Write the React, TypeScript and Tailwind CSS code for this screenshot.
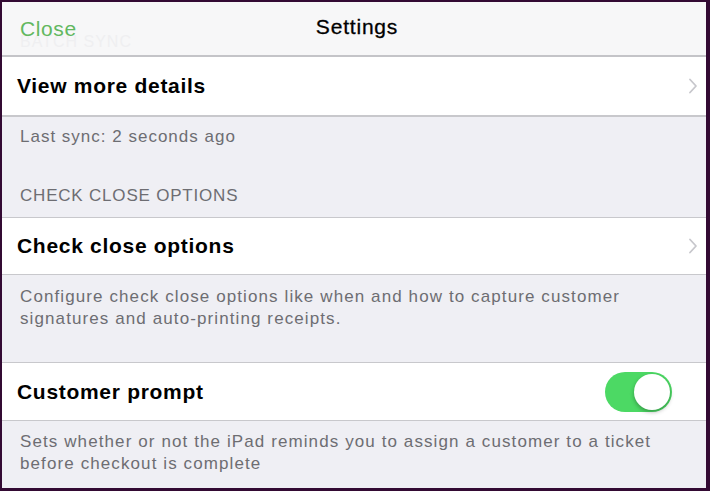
import React, { useState } from 'react'

function Chevron() {
  return (
    <svg width="10" height="16" viewBox="0 0 10 16" className="text-[#c7c7cc]">
      <path d="M2 1.5 L8 8 L2 14.5" fill="none" stroke="currentColor" strokeWidth="1.8" strokeLinecap="round" strokeLinejoin="round" />
    </svg>
  )
}

function Toggle({ on, onChange }: { on: boolean; onChange: () => void }) {
  return (
    <button
      onClick={onChange}
      className={`relative h-[40px] w-[67px] rounded-full transition-colors ${on ? 'bg-[#4cd964]' : 'bg-[#e5e5ea]'}`}
    >
      <span
        className={`absolute top-[2px] h-[36px] w-[36px] rounded-full bg-white shadow-[0_2px_4px_rgba(0,0,0,0.3)] transition-all ${on ? 'left-[29px]' : 'left-[2px]'}`}
      />
    </button>
  )
}

export default function App() {
  const [customerPrompt, setCustomerPrompt] = useState(true)

  return (
    <div className="h-[491px] w-[710px] overflow-hidden bg-[#330a33] pt-[2px] pr-[4px] pb-[3px] pl-[2px] font-['Liberation_Sans',Arial,sans-serif]">
      <div className="flex h-full flex-col overflow-hidden bg-[#efeff4]">
        {/* Nav bar, with the scrolled-away section header showing faintly through it */}
        <div className="relative flex h-[55px] shrink-0 items-center justify-center border-b-2 border-[#c4c4c8] bg-[#f7f7f8] pb-[4px]">
          <span className="absolute top-[28px] left-[18px] text-[16px] tracking-[1px] text-[#efeff1]">BATCH SYNC</span>
          <button className="absolute top-[11px] left-[18px] text-[21px] tracking-[0.6px] text-[#62b860]">Close</button>
          <h1 className="ml-[6px] text-[21px] tracking-[0.8px] text-black [-webkit-text-stroke:0.3px_black]">Settings</h1>
        </div>

        {/* View more details */}
        <div className="flex h-[60px] shrink-0 items-center justify-between border-b-2 border-[#c8c8cc] bg-white pr-[8px] pl-[15px]">
          <span className="text-[21px] font-bold tracking-[0.7px] text-black">View more details</span>
          <Chevron />
        </div>
        <div className="px-[18px] pt-[10px] text-[17px] leading-[20px] tracking-[1px] text-[#6d6d72]">Last sync: 2 seconds ago</div>

        <div className="mt-[39px] px-[18px] pb-[11px] text-[17px] leading-[20px] tracking-[0.8px] text-[#6d6d72]">CHECK CLOSE OPTIONS</div>

        {/* Check close options */}
        <div className="flex h-[58px] shrink-0 items-center justify-between border-y border-[#c8c8cc] bg-white pr-[8px] pl-[15px]">
          <span className="text-[21px] font-bold tracking-[0.7px] text-black">Check close options</span>
          <Chevron />
        </div>
        <div className="px-[18px] pt-[11px] text-[17px] leading-[22px] tracking-[1.1px] text-[#6d6d72]">
          Configure check close options like when and how to capture customer
          <br />
          signatures and auto-printing receipts.
        </div>

        {/* Customer prompt */}
        <div className="mt-[32px] flex h-[59px] shrink-0 items-center justify-between border-y border-[#c8c8cc] bg-white pr-[34px] pl-[15px]">
          <span className="text-[21px] font-bold tracking-[0.7px] text-black">Customer prompt</span>
          <Toggle on={customerPrompt} onChange={() => setCustomerPrompt(!customerPrompt)} />
        </div>
        <div className="px-[18px] pt-[10px] text-[17px] leading-[22px] tracking-[1.1px] text-[#6d6d72]">
          Sets whether or not the iPad reminds you to assign a customer to a ticket
          <br />
          before checkout is complete
        </div>
      </div>
    </div>
  )
}
